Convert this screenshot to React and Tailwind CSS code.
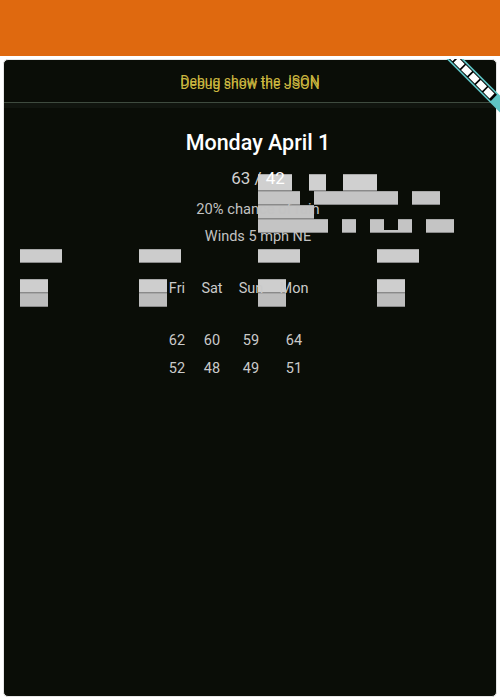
import React from "react";

const edge = "border-b border-t border-b-[#8a8a8a] border-t-[#a8a8a8] shrink-0";

function Col() {
  return (
    <div className="flex flex-col">
      <div className={"w-[42px] h-[14px] bg-[#cccccc] " + edge} />
      <div className={"mt-[16px] w-[28px] h-[14px] bg-[#cecece] " + edge} />
      <div className={"w-[28px] h-[14px] bg-[#bdbdbd] " + edge} />
    </div>
  );
}

function Row({ cells }) {
  return (
    <div className="ml-[140px] grid grid-cols-[34px_36px_42px_44px] text-center text-[14.5px] leading-[20px] text-[#cacaca]">
      {cells.map((c) => (
        <div key={c}>{c}</div>
      ))}
    </div>
  );
}

export default function App() {
  return (
    <div
      className="relative w-[500px] h-[700px] bg-white overflow-hidden"
      style={{ fontFamily: "Roboto, 'Noto Sans', sans-serif" }}
    >
      <div className="h-[56px] bg-[#df690f]" />
      <div className="relative mx-[3px] mt-[3px] h-[638px] rounded-[5px] border border-[#e6e6e6] bg-[#0a0d07] overflow-hidden">
        {/* placeholder glyph boxes drawn over the content */}
        <div className="absolute left-[254px] top-[114px] flex flex-col">
          <div className="flex gap-[17px] h-[17px]">
            <div className={"w-[34px] bg-[#d0d0d0] " + edge} />
            <div className={"w-[17px] bg-[#d0d0d0] " + edge} />
            <div className={"w-[34px] bg-[#d0d0d0] " + edge} />
          </div>
          <div className="flex gap-[14px] h-[14px]">
            <div className={"w-[42px] bg-[#c4c4c4] " + edge} />
            <div className={"w-[84px] bg-[#c4c4c4] " + edge} />
            <div className={"w-[28px] bg-[#c4c4c4] " + edge} />
          </div>
          <div className="flex h-[14px]">
            <div className={"w-[56px] bg-[#c4c4c4] " + edge} />
          </div>
          <div className="flex gap-[14px] h-[14px]">
            <div className={"w-[70px] bg-[#c4c4c4] " + edge} />
            <div className={"w-[14px] bg-[#c4c4c4] " + edge} />
            <div className="flex w-[42px] items-end">
              <div className={"w-[14px] h-full bg-[#c4c4c4] " + edge} />
              <div className="w-[14px] h-[3px] bg-[#c4c4c4] border-b border-[#8a8a8a]" />
              <div className={"w-[14px] h-full bg-[#c4c4c4] " + edge} />
            </div>
            <div className={"w-[28px] bg-[#c4c4c4] " + edge} />
          </div>
        </div>
        <div className="absolute left-[16px] top-[189px] w-[476px] grid grid-cols-4">
          <Col />
          <Col />
          <Col />
          <Col />
        </div>

        {/* header */}
        <div className="relative h-[43px] border-b border-[#3f4b3f] flex items-center justify-center">
          <div className="relative text-[14px] leading-[20px] text-[#c9b53f]">
            <span>Debug show the JSON</span>
            <span className="absolute left-0 top-[3px] whitespace-nowrap">Debug show the JSON</span>
          </div>
        </div>
        <div className="h-[5px] bg-[#11150f]" />

        {/* content */}
        <div className="relative pl-[16px] flex flex-col">
          <div className="flex flex-col items-center">
            <div className="mt-[21px] text-[21.5px] leading-[28px] font-medium text-white">Monday April 1</div>
            <div className="mt-[9px] text-[17px] leading-[24px] text-[#d0d0d0]">
              63 / <span className="text-white">42</span>
            </div>
            <div className="mt-[9px] text-[14.7px] leading-[20px] text-[#c2c2c2]">20% chance of rain</div>
            <div className="mt-[8px] text-[14.5px] leading-[20px] text-[#c2c2c2]">Winds 5 mph NE</div>
          </div>
          <div className="mt-[32px]">
            <Row cells={["Fri", "Sat", "Sun", "Mon"]} />
          </div>
          <div className="mt-[32px] flex flex-col gap-[8px]">
            <Row cells={["62", "60", "59", "64"]} />
            <Row cells={["52", "48", "49", "51"]} />
          </div>
        </div>
      </div>

      {/* corner ribbon */}
      <svg className="absolute left-[440px] top-[59px]" width="60" height="56" viewBox="0 0 60 56">
        <g transform="translate(15 0) rotate(45)">
          <rect x="-12" y="-6" width="100" height="12" fill="#5fc4c4" />
          <rect x="-12" y="-4.3" width="67" height="8.6" fill="#000" />
          {[0, 1, 2, 3, 4, 5].map((i) => (
            <rect key={i} x={-9 + i * 10.5} y="-3.4" width="8.8" height="6.8" fill="#fff" />
          ))}
        </g>
      </svg>
    </div>
  );
}
